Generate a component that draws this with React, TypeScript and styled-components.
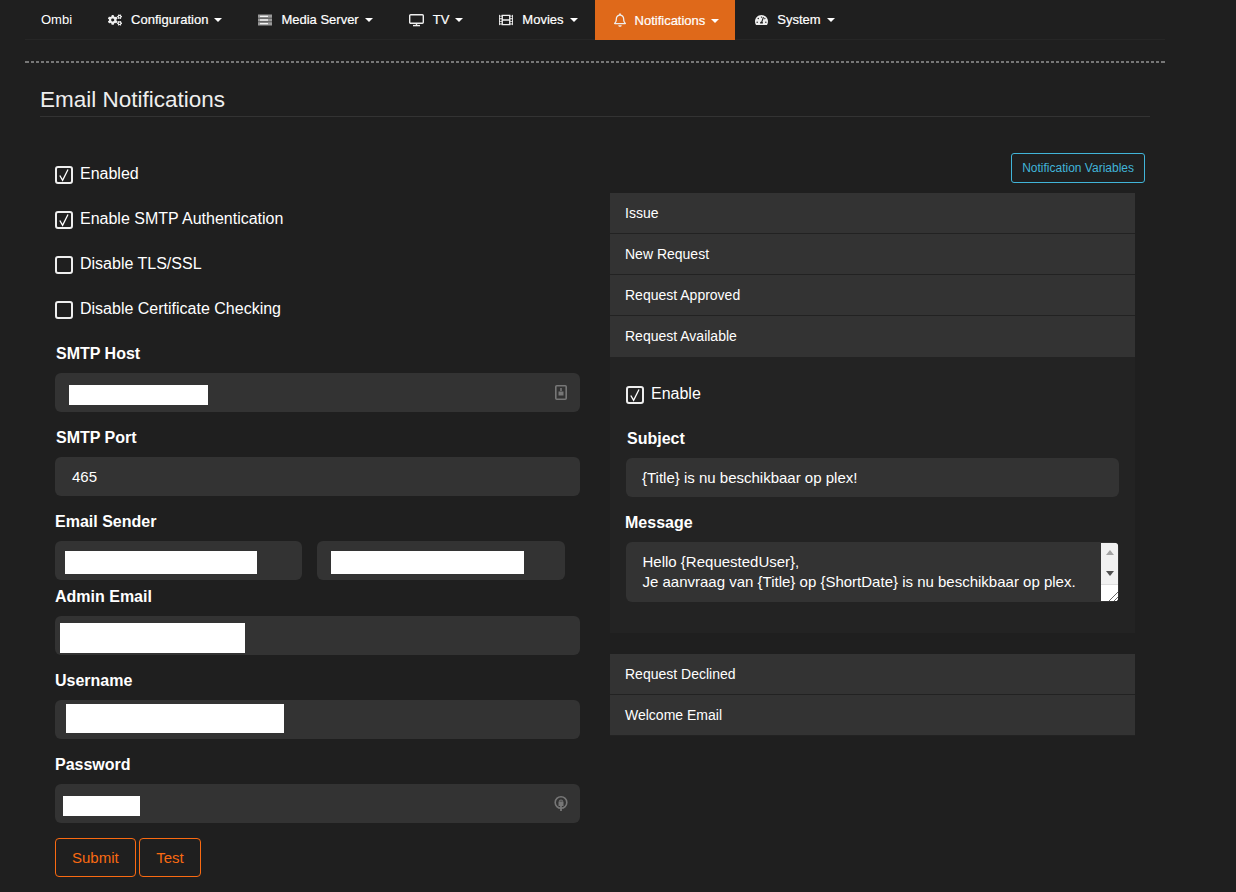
import styled, { createGlobalStyle } from 'styled-components';
import { FaCogs, FaFilm, FaRegBell, FaTachometerAlt } from 'react-icons/fa';

const GlobalStyle = createGlobalStyle`
  html, body {
    margin: 0;
    height: 892px;
    overflow: hidden;
    background: #1f1f1f;
    color: #fff;
    font-family: "Liberation Sans", Arial, sans-serif;
  }
`;

const Wrapper = styled.div`
  width: 1140px;
  margin-left: 25px;
`;

const Nav = styled.nav`
  display: flex;
  height: 39px;
  border-bottom: 1px solid #262626;
`;

const Brand = styled.a`
  display: flex;
  align-items: center;
  height: 38px;
  padding: 0 17px 0 16px;
  font-size: 13px;
  color: #fff;
`;

const NavItem = styled.a<{ $active?: boolean; $iconWidth?: number }>`
  display: flex;
  align-items: center;
  height: ${(p) => (p.$active ? '40px' : '39px')};
  padding: 0 16px 0 19px;
  margin-right: 1px;
  background: ${(p) => (p.$active ? '#df691a' : 'transparent')};
  font-size: 13px;
  color: #fff;
  -webkit-text-stroke: 0.2px #fff;

  svg {
    width: ${(p) => p.$iconWidth ?? 14}px;
    height: 14px;
    margin-right: 9px;
    color: #eee;
  }
`;

const Caret = styled.span`
  width: 0;
  height: 0;
  margin-left: 6px;
  margin-top: 1px;
  border-top: 4px solid #fff;
  border-left: 4px solid transparent;
  border-right: 4px solid transparent;
`;

const DashedRule = styled.hr`
  height: 2px;
  margin: 21px 0 0;
  border: 0;
  background:
    linear-gradient(#777, #777) left top / 1px 2px no-repeat,
    linear-gradient(#777, #777) right top / 1px 2px no-repeat,
    linear-gradient(to right, #777 3px, transparent 3px) 1px 0 / 5px 2px repeat-x;
`;

const Title = styled.h1`
  margin: 23px 15px 0;
  padding-bottom: 2px;
  border-bottom: 1px solid #333;
  font-size: 22.5px;
  line-height: 28px;
  font-weight: 400;
  color: #eee;
`;

const Columns = styled.div`
  display: grid;
  grid-template-columns: 525px 525px;
  column-gap: 30px;
  padding: 36px 0 0 30px;
`;

const LeftColumn = styled.div`
  display: flex;
  flex-direction: column;
  padding-top: 12px;
`;

const RightColumn = styled.div`
  display: flex;
  flex-direction: column;
`;

const CheckRow = styled.label<{ $spacing?: number }>`
  display: flex;
  align-items: center;
  height: 18px;
  margin-bottom: ${(p) => p.$spacing ?? 27}px;
  font-size: 16px;
  line-height: 18px;
`;

const CheckBox = styled.span`
  display: flex;
  align-items: center;
  justify-content: center;
  box-sizing: border-box;
  width: 18px;
  height: 18px;
  margin: 2px 7px 0 0;
  border: 2px solid #eee;
  border-radius: 3px;

  svg {
    width: 14px;
    height: 14px;
  }
`;

const Label = styled.div<{ $indent?: number }>`
  height: 28px;
  margin-left: ${(p) => p.$indent ?? 0}px;
  font-size: 16px;
  font-weight: 700;
  line-height: 18px;
`;

const Field = styled.div<{ $pad?: number }>`
  display: flex;
  align-items: center;
  justify-content: space-between;
  box-sizing: border-box;
  height: 39px;
  padding: 0 12px 0 ${(p) => p.$pad ?? 14}px;
  background: #333;
  border-radius: 6px;
  font-size: 15px;
  color: #fff;

  svg {
    width: 14px;
    height: 17px;
    color: #777;
  }
`;

const FieldGroup = styled.div<{ $after?: number }>`
  margin-bottom: ${(p) => p.$after ?? 17}px;
`;

const Redacted = styled.div<{ $w: number; $h?: number; $down?: number }>`
  width: ${(p) => p.$w}px;
  height: ${(p) => p.$h ?? 20}px;
  margin-top: ${(p) => p.$down ?? 5}px;
  background: #fff;
`;

const SenderRow = styled.div`
  display: grid;
  grid-template-columns: 247px 248px;
  column-gap: 15px;
  width: 510px;
  margin-bottom: 8px;
`;

const ButtonRow = styled.div`
  display: flex;
  gap: 3.5px;
  margin-top: 15px;
`;

const OutlineButton = styled.button`
  height: 39px;
  padding: 0 16px;
  background: transparent;
  border: 1px solid #f96a12;
  border-radius: 4px;
  font-family: inherit;
  font-size: 15px;
  color: #f96a12;
`;

const VariablesButton = styled.button`
  align-self: flex-end;
  height: 30px;
  margin: 0 -10px 10px 0;
  padding: 0 10px;
  background: transparent;
  border: 1px solid #41b4d8;
  border-radius: 3px;
  font-family: inherit;
  font-size: 12px;
  color: #41b4d8;
`;

const Accordion = styled.div`
  display: flex;
  flex-direction: column;
`;

const AccordionHead = styled.div<{ $last?: boolean }>`
  display: flex;
  align-items: center;
  box-sizing: border-box;
  height: 41px;
  padding-left: 15px;
  background: #333;
  border-bottom: 1px solid ${(p) => (p.$last ? '#333' : '#222')};
  font-size: 14px;
`;

const AccordionBody = styled.div`
  display: flex;
  flex-direction: column;
  box-sizing: border-box;
  height: 276px;
  margin-bottom: 21px;
  padding: 28px 16px 0 16px;
  background: #232323;
`;

const Message = styled.div`
  display: flex;
  height: 60px;
  background: #333;
  border-radius: 6px;
  overflow: hidden;
`;

const MessageText = styled.div`
  flex: 1;
  padding: 10px 0 0 16.5px;
  font-size: 15px;
  line-height: 20px;
`;

const ScrollBar = styled.div`
  display: flex;
  flex-direction: column;
  width: 17px;
  margin: 1px 1px 1px 0;
  background: #f1f1f1;
`;

const ScrollTrack = styled.div`
  display: flex;
  flex: 1;
  flex-direction: column;
  align-items: center;
  justify-content: space-between;
  padding: 7px 0 8px;
`;

const ArrowUp = styled.span`
  border-bottom: 5px solid #a3a3a3;
  border-left: 4px solid transparent;
  border-right: 4px solid transparent;
`;

const ArrowDown = styled.span`
  border-top: 5px solid #505050;
  border-left: 4px solid transparent;
  border-right: 4px solid transparent;
`;

const ResizeCorner = styled.div`
  display: flex;
  align-items: flex-end;
  justify-content: flex-end;
  height: 16px;
  background: #fff;
  border-top: 1px solid #ddd;

  svg {
    width: 10px;
    height: 10px;
  }
`;

const Tick = () => (
  <svg viewBox="0 0 14 14" fill="none" stroke="#fff" strokeWidth="1.3">
    <path d="M2.8 7.5 L5.6 12.4 L11 1.5" />
  </svg>
);

const ServerIcon = () => (
  <svg viewBox="0 0 14 14">
    <rect x="0" y="1.5" width="14" height="11" fill="#9a9a9a" />
    <path d="M2 3.4h8M2 7h8M2 10.6h8" stroke="#f2f2f2" strokeWidth="1.3" />
    <path d="M0 5.2h14M0 8.8h14" stroke="#333" strokeWidth="0.7" />
  </svg>
);

const TvIcon = () => (
  <svg viewBox="0 0 15 14" fill="none" stroke="currentColor">
    <rect x="0.7" y="1.7" width="13.6" height="8.6" rx="1" strokeWidth="1.4" />
    <path d="M4 12.6h7" strokeWidth="1.4" />
    <path d="M7.5 10v2.5" strokeWidth="1.4" />
  </svg>
);

const KeyIcon = () => (
  <svg viewBox="0 0 14 17" fill="none" stroke="currentColor">
    <rect x="1.8" y="1.8" width="10.4" height="13.4" strokeWidth="1.6" rx="1" />
    <path d="M7 4v3" strokeWidth="1.6" />
    <rect x="4.5" y="7.5" width="5" height="4" fill="currentColor" stroke="none" />
  </svg>
);

const LockIcon = () => (
  <svg viewBox="0 0 14 17" fill="none" stroke="currentColor">
    <circle cx="7" cy="7.5" r="5.8" strokeWidth="1.6" />
    <path d="M5.5 6.5a1.5 1.5 0 0 1 3 0" strokeWidth="1.2" />
    <rect x="4.5" y="6.5" width="5" height="4.5" fill="currentColor" stroke="none" />
    <path d="M7 11v5" strokeWidth="1.8" />
  </svg>
);

const navItems = [
  { label: 'Configuration', icon: <FaCogs /> },
  { label: 'Media Server', icon: <ServerIcon /> },
  { label: 'TV', icon: <TvIcon />, iconWidth: 15 },
  { label: 'Movies', icon: <FaFilm /> },
  { label: 'Notifications', icon: <FaRegBell />, iconWidth: 12, active: true },
  { label: 'System', icon: <FaTachometerAlt />, iconWidth: 13 },
];

const checks = [
  { label: 'Enabled', checked: true },
  { label: 'Enable SMTP Authentication', checked: true },
  { label: 'Disable TLS/SSL', checked: false },
  { label: 'Disable Certificate Checking', checked: false },
];

const App = () => {
  return (
    <>
      <GlobalStyle />
      <Wrapper>
        <Nav>
          <Brand>Ombi</Brand>
          {navItems.map((item) => (
            <NavItem key={item.label} $active={item.active} $iconWidth={item.iconWidth}>
              {item.icon}
              {item.label}
              <Caret />
            </NavItem>
          ))}
        </Nav>
        <DashedRule />
        <Title>Email Notifications</Title>
        <Columns>
          <LeftColumn>
            {checks.map((c) => (
              <CheckRow key={c.label}>
                <CheckBox>{c.checked && <Tick />}</CheckBox>
                {c.label}
              </CheckRow>
            ))}
            <Label $indent={1}>SMTP Host</Label>
            <FieldGroup>
              <Field>
                <Redacted $w={139} />
                <KeyIcon />
              </Field>
            </FieldGroup>
            <Label $indent={1}>SMTP Port</Label>
            <FieldGroup>
              <Field $pad={17}>465</Field>
            </FieldGroup>
            <Label>Email Sender</Label>
            <SenderRow>
              <Field $pad={10}>
                <Redacted $w={192} $h={23} $down={4} />
              </Field>
              <Field>
                <Redacted $w={193} $h={23} $down={4} />
              </Field>
            </SenderRow>
            <Label>Admin Email</Label>
            <FieldGroup>
              <Field $pad={5}>
                <Redacted $w={185} $h={30} />
              </Field>
            </FieldGroup>
            <Label>Username</Label>
            <FieldGroup>
              <Field $pad={11}>
                <Redacted $w={218} $h={29} $down={-2} />
              </Field>
            </FieldGroup>
            <Label>Password</Label>
            <FieldGroup $after={0}>
              <Field $pad={8}>
                <Redacted $w={77} />
                <LockIcon />
              </Field>
            </FieldGroup>
            <ButtonRow>
              <OutlineButton>Submit</OutlineButton>
              <OutlineButton>Test</OutlineButton>
            </ButtonRow>
          </LeftColumn>
          <RightColumn>
            <VariablesButton>Notification Variables</VariablesButton>
            <Accordion>
              <AccordionHead>Issue</AccordionHead>
              <AccordionHead>New Request</AccordionHead>
              <AccordionHead>Request Approved</AccordionHead>
              <AccordionHead $last>Request Available</AccordionHead>
              <AccordionBody>
                <CheckRow $spacing={27}>
                  <CheckBox>
                    <Tick />
                  </CheckBox>
                  Enable
                </CheckRow>
                <Label $indent={1}>Subject</Label>
                <FieldGroup>
                  <Field $pad={16}>{'{Title} is nu beschikbaar op plex!'}</Field>
                </FieldGroup>
                <Label $indent={-1}>Message</Label>
                <Message>
                  <MessageText>
                    Hello {'{RequestedUser}'},
                    <br />
                    Je aanvraag van {'{Title}'} op {'{ShortDate}'} is nu beschikbaar op plex.
                  </MessageText>
                  <ScrollBar>
                    <ScrollTrack>
                      <ArrowUp />
                      <ArrowDown />
                    </ScrollTrack>
                    <ResizeCorner>
                      <svg viewBox="0 0 10 10" stroke="#666" strokeWidth="1">
                        <path d="M1 10 L10 1 M6 10 L10 6" />
                      </svg>
                    </ResizeCorner>
                  </ScrollBar>
                </Message>
              </AccordionBody>
              <AccordionHead>Request Declined</AccordionHead>
              <AccordionHead>Welcome Email</AccordionHead>
            </Accordion>
          </RightColumn>
        </Columns>
      </Wrapper>
    </>
  );
};

export default App;
